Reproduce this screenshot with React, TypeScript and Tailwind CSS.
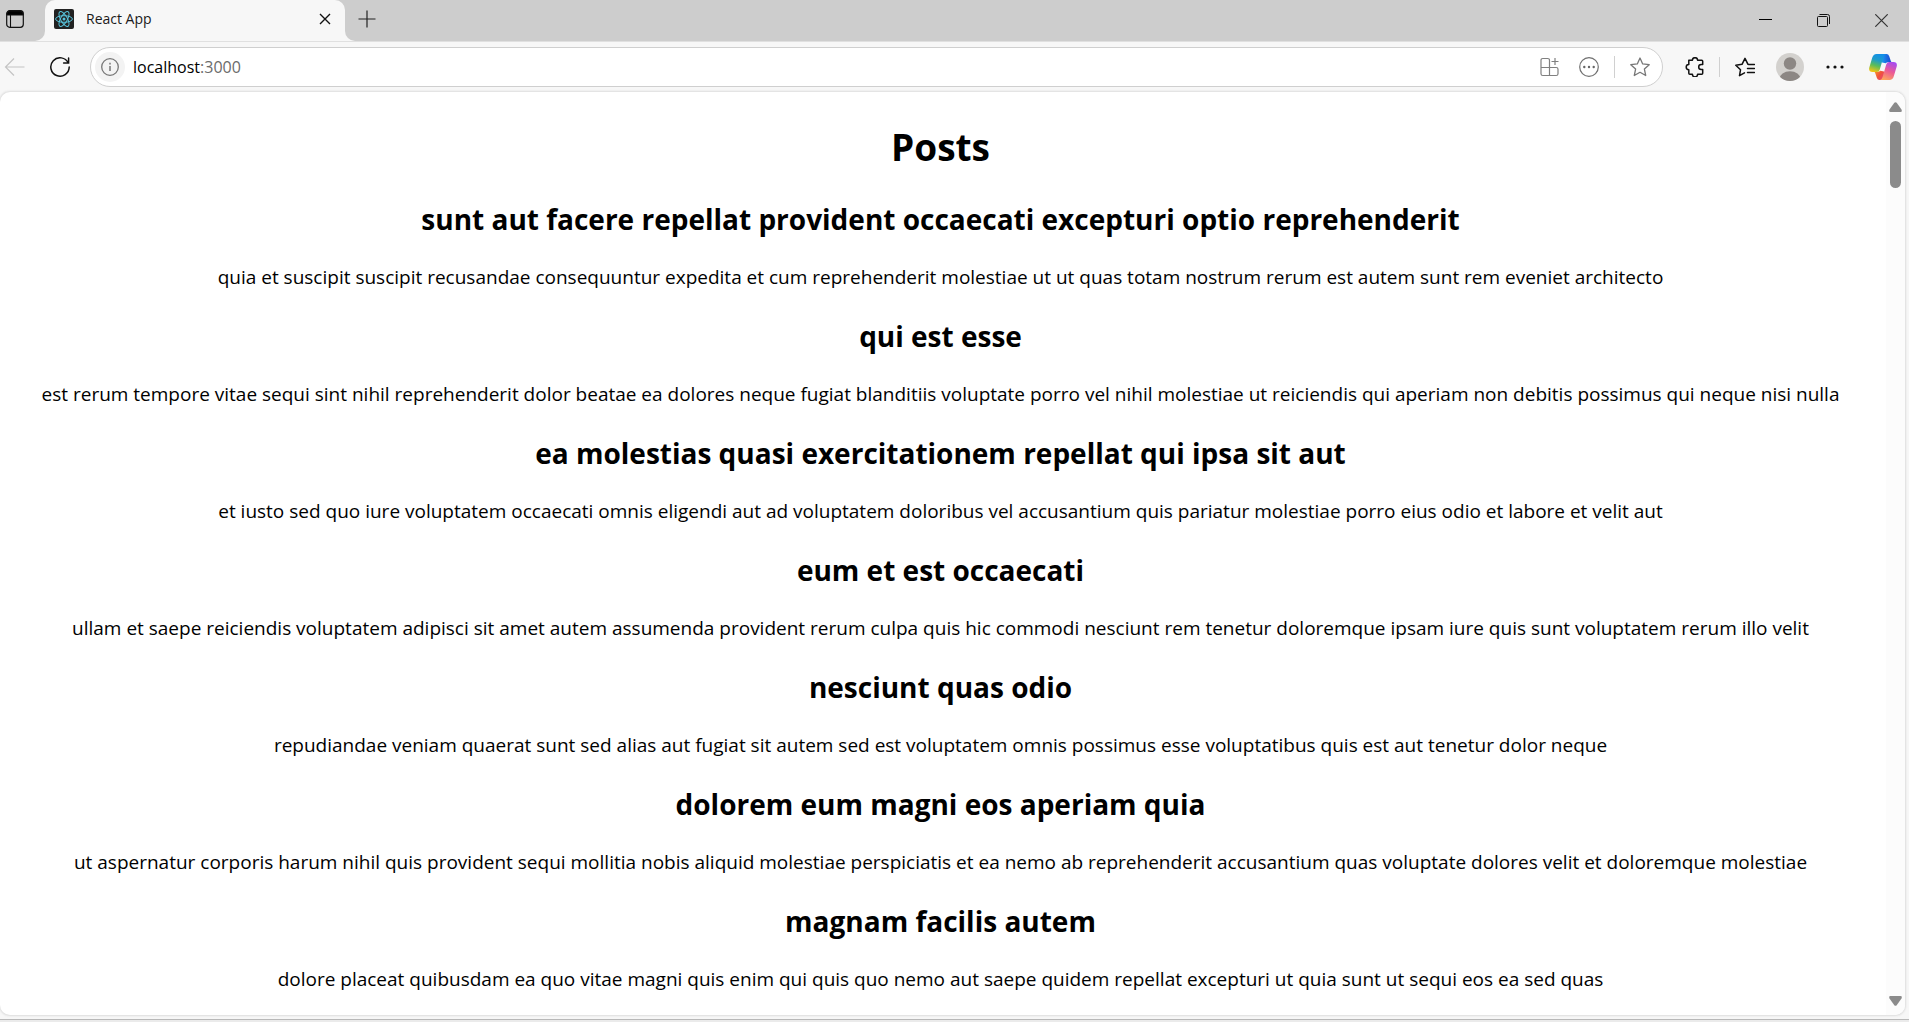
import React from "react";

const posts = [
  { title: "sunt aut facere repellat provident occaecati excepturi optio reprehenderit", body: "quia et suscipit suscipit recusandae consequuntur expedita et cum reprehenderit molestiae ut ut quas totam nostrum rerum est autem sunt rem eveniet architecto" },
  { title: "qui est esse", body: "est rerum tempore vitae sequi sint nihil reprehenderit dolor beatae ea dolores neque fugiat blanditiis voluptate porro vel nihil molestiae ut reiciendis qui aperiam non debitis possimus qui neque nisi nulla" },
  { title: "ea molestias quasi exercitationem repellat qui ipsa sit aut", body: "et iusto sed quo iure voluptatem occaecati omnis eligendi aut ad voluptatem doloribus vel accusantium quis pariatur molestiae porro eius odio et labore et velit aut" },
  { title: "eum et est occaecati", body: "ullam et saepe reiciendis voluptatem adipisci sit amet autem assumenda provident rerum culpa quis hic commodi nesciunt rem tenetur doloremque ipsam iure quis sunt voluptatem rerum illo velit" },
  { title: "nesciunt quas odio", body: "repudiandae veniam quaerat sunt sed alias aut fugiat sit autem sed est voluptatem omnis possimus esse voluptatibus quis est aut tenetur dolor neque" },
  { title: "dolorem eum magni eos aperiam quia", body: "ut aspernatur corporis harum nihil quis provident sequi mollitia nobis aliquid molestiae perspiciatis et ea nemo ab reprehenderit accusantium quas voluptate dolores velit et doloremque molestiae" },
  { title: "magnam facilis autem", body: "dolore placeat quibusdam ea quo vitae magni quis enim qui quis quo nemo aut saepe quidem repellat excepturi ut quia sunt ut sequi eos ea sed quas" },
];

function TabStrip() {
  return (
    <div className="flex h-[41px] bg-[#f7f7f7]">
      <div className="flex w-[45px] items-center rounded-br-[10px] bg-[#cdcdcd] pl-1.5">
        <button aria-label="Tab actions menu">
          <svg width="18" height="18" viewBox="0 0 18 18" className="mb-1" fill="none" stroke="#111">
            <rect x="0.7" y="0.7" width="16.6" height="16.6" rx="3" strokeWidth="1.2" />
            <path d="M1 3.5Q1 1 3.5 1h11Q17 1 17 3.5V5H1z" fill="#000" />
            <path d="M4.5 5v12" strokeWidth="1.1" />
          </svg>
        </button>
      </div>
      <div className="bg-[#cdcdcd]">
        <div className="flex h-full w-[300px] items-center rounded-t-[10px] bg-[#f7f7f7] pr-3.5 pb-1 pl-[9px]">
          <svg width="20" height="20" viewBox="0 0 20 20" fill="none" stroke="#58c4dc">
            <rect width="20" height="20" rx="2" fill="#222" stroke="none" />
            <circle cx="10" cy="10" r="1.5" fill="#58c4dc" stroke="none" />
            <ellipse cx="10" cy="10" rx="8.4" ry="3.3" />
            <ellipse cx="10" cy="10" rx="8.4" ry="3.3" transform="rotate(60 10 10)" />
            <ellipse cx="10" cy="10" rx="8.4" ry="3.3" transform="rotate(120 10 10)" />
          </svg>
          <span className="ml-3 flex-1 text-[14px] text-[#1a1a1a]">React App</span>
          <button aria-label="Close tab">
            <svg width="12" height="12" viewBox="0 0 12 12" stroke="#111" strokeWidth="1.4"><path d="M1 1l10 10M11 1L1 11" /></svg>
          </button>
        </div>
      </div>
      <div className="flex flex-1 items-center rounded-bl-[10px] bg-[#cdcdcd] pr-[21px] pb-1 pl-[13px]">
        <button aria-label="New tab">
          <svg width="18" height="18" viewBox="0 0 18 18" stroke="#222" strokeWidth="1.2"><path d="M9 0.5v17M0.5 9h17" /></svg>
        </button>
        <div className="ml-auto flex items-center gap-[45px] pt-1">
          <button aria-label="Minimize">
            <svg width="13" height="13" viewBox="0 0 13 13"><path d="M0 5.5h13" stroke="#000" /></svg>
          </button>
          <button aria-label="Restore">
            <svg width="13" height="13" viewBox="0 0 13 13" fill="none" stroke="#111">
              <rect x="0.5" y="2.5" width="10" height="10" rx="1" />
              <path d="M2.5 0.5H10.5Q12.5 0.5 12.5 2.5V10" />
            </svg>
          </button>
          <button aria-label="Close window">
            <svg width="13" height="13" viewBox="0 0 13 13" stroke="#333" strokeWidth="1.2"><path d="M0.3 0.3l12.4 12.4M12.7 0.3L0.3 12.7" /></svg>
          </button>
        </div>
      </div>
    </div>
  );
}

function CopilotLogo() {
  return (
    <svg width="28" height="26" viewBox="0 0 28 26">
      <defs>
        <linearGradient id="cpBack" x1="0" y1="0" x2="1" y2="0">
          <stop offset="0" stopColor="#1aa4ee" />
          <stop offset="0.5" stopColor="#1b6be0" />
          <stop offset="1" stopColor="#1c43c8" />
        </linearGradient>
        <linearGradient id="cpLeft" x1="0.6" y1="0" x2="0.3" y2="1">
          <stop offset="0" stopColor="#128fe9" />
          <stop offset="0.35" stopColor="#1f9cc8" />
          <stop offset="0.65" stopColor="#5bbd59" />
          <stop offset="1" stopColor="#f2c515" />
        </linearGradient>
        <linearGradient id="cpRight" x1="0.7" y1="0" x2="0.3" y2="1">
          <stop offset="0" stopColor="#a64bf0" />
          <stop offset="0.5" stopColor="#ec5a95" />
          <stop offset="1" stopColor="#fda65c" />
        </linearGradient>
        <linearGradient id="cpFront" x1="0" y1="0" x2="1" y2="0.6">
          <stop offset="0" stopColor="#f9a02a" />
          <stop offset="0.6" stopColor="#f0513a" />
          <stop offset="1" stopColor="#e8477a" />
        </linearGradient>
      </defs>
      <path d="M12 0h5.5q2 0 2.700 2.200l1.700 5q.3 1 1.600 1h-4.500q-1.500 0-2.200 1L13 8.500z" fill="url(#cpBack)" />
      <path d="M16 26h-5.500q-2 0-2.700-2.200l-1.700-5q-.3-1-1.600-1H9q1.500 0 2.200-1l3.800.7z" fill="url(#cpFront)" />
      <path d="M7.500 0H17q-1.800.5-2.600 3L10.800 15.500q-.7 2.500-3 2.500H3.500Q-.7 18 .3 13.500L3.200 3.800Q4.300 0 7.500 0z" fill="url(#cpLeft)" />
      <path d="M20.500 26H11q1.800-.5 2.600-3L17.200 10.500q.7-2.500 3-2.500h4.300q4.200 0 3.200 4.500l-2.900 9.700q-1.100 3.800-4.300 3.800z" fill="url(#cpRight)" />
    </svg>
  );
}

function Toolbar() {
  return (
    <div className="flex h-[51px] items-center border-t border-[#e0e0e0] bg-[#f7f7f7] pr-3 pl-1">
      <button aria-label="Back" className="mr-[25px]">
        <svg width="21" height="20" viewBox="0 0 21 20" fill="none" stroke="#c4c4c4" strokeWidth="1.200"><path d="M20.500 10H1.500M10 1.500L1.500 10l8.500 8.500" /></svg>
      </button>
      <button aria-label="Refresh">
        <svg width="20" height="20" viewBox="0 0 20 20" fill="none" stroke="#111" strokeWidth="1.500" strokeLinecap="round"><path d="M18.300 6A9.200 9.200 0 1 0 19.200 10M18.600 1v5h-5" /></svg>
      </button>
      <div className="ml-5 flex h-10 flex-1 items-center rounded-full border border-[#cfcfcf] bg-white pr-3">
        <button aria-label="View site information" className="ml-1 flex size-[30px] items-center justify-center rounded-full bg-[#f3f3f3]">
          <svg width="18" height="18" viewBox="0 0 18 18" fill="none" stroke="#777">
            <circle cx="9" cy="9" r="8.300" strokeWidth="1.300" />
            <path d="M9 8v5M9 4.800v1.700" strokeWidth="1.500" />
          </svg>
        </button>
        <label className="relative ml-2 flex flex-1 items-center text-[16px]">
          <input aria-label="Address" defaultValue="localhost:3000" className="w-full bg-transparent text-transparent outline-none" />
          <span aria-hidden="true" className="pointer-events-none absolute left-0 text-[#6b6b6b]"><span className="text-black">localhost</span>:3000</span>
        </label>
        <button aria-label="App available">
          <svg width="19" height="20" viewBox="0 0 19 20" fill="none" stroke="#808080" strokeWidth="1.200">
            <path d="M9.500 10.500V3.300Q9.500 1.500 7.700 1.500H2.800Q1 1.500 1 3.300v13.400Q1 18.500 2.800 18.500h13.400Q18 18.500 18 16.700v-4.400Q18 10.500 16.200 10.500H1M9.500 10.500v8M15 1v7M11.500 4.500h7" />
          </svg>
        </button>
        <button aria-label="More site options" className="ml-5">
          <svg width="20" height="20" viewBox="0 0 20 20" fill="none" stroke="#707070" strokeWidth="1.200">
            <circle cx="10" cy="10" r="9.300" />
            <g fill="#666" stroke="none"><circle cx="5.300" cy="10" r="1.200" /><circle cx="10" cy="10" r="1.200" /><circle cx="14.700" cy="10" r="1.200" /></g>
          </svg>
        </button>
        <div className="mx-[15px] h-[22px] w-px bg-[#d0d0d0]" />
        <button aria-label="Add to favorites">
          <svg width="20" height="20" viewBox="0 0 20 20" fill="none" stroke="#777" strokeWidth="1.300" strokeLinejoin="round">
            <path d="M10 1l2.700 5.900 6.500.8-4.800 4.400 1.300 6.400L10 15.300l-5.700 3.200 1.300-6.400L.8 7.700l6.500-.8z" />
          </svg>
        </button>
      </div>
      <button aria-label="Extensions" className="ml-[22px]">
        <svg width="19" height="20" viewBox="0 0 19 20" fill="none" stroke="#111" strokeWidth="1.500" strokeLinejoin="round">
          <path d="M3.800 3.300h3.600A2.600 2.600 0 0 1 12.600 3.300h4.100q1 0 1 1v3.200h-1.500a2.500 2.500 0 0 0 0 5h1.500v3.800q0 1-1 1h-4.100a2.600 2.600 0 0 1-5.200 0H4.800q-1 0-1-1v-3.600A2.600 2.600 0 0 1 3.800 7.500z" />
        </svg>
      </button>
      <div className="mx-[15px] h-5 w-px bg-[#d0d0d0]" />
      <button aria-label="Favorites">
        <svg width="20" height="20" viewBox="0 0 20 20" fill="none" stroke="#111" strokeWidth="1.500" strokeLinejoin="round" strokeLinecap="round">
          <path d="M9.500 15.800L4.500 18.700l1-5.900L.8 8.200l6.200-.9L10 1.300l3 6M13.500 7.500H19.500M12.500 11.500h7M12.500 15.500h7" />
        </svg>
      </button>
      <button aria-label="Profile" className="ml-[21px]">
        <svg width="28" height="28" viewBox="0 0 28 28">
          <defs><clipPath id="avatarClip"><circle cx="14" cy="14" r="14" /></clipPath></defs>
          <circle cx="14" cy="14" r="14" fill="#d3d1ce" />
          <g fill="#8c8784" clipPath="url(#avatarClip)"><circle cx="14" cy="10.500" r="6.200" /><ellipse cx="14" cy="26" rx="10.500" ry="7.800" /></g>
        </svg>
      </button>
      <button aria-label="Settings and more" className="ml-[22px]">
        <svg width="18" height="6" viewBox="0 0 18 6" fill="#111"><circle cx="2" cy="3" r="1.600" /><circle cx="9" cy="3" r="1.600" /><circle cx="16" cy="3" r="1.600" /></svg>
      </button>
      <button aria-label="Copilot" className="ml-[25px]"><CopilotLogo /></button>
    </div>
  );
}

function Scrollbar() {
  return (
    <div className="flex w-[19px] flex-col items-center bg-[#fcfcfc] pt-2.5 pb-[9px]">
      <svg width="13" height="10" viewBox="0 0 13 10" fill="#8b8b8b"><path d="M5.300.8Q6.500-.5 7.700.8L12.500 7.500Q13.500 10 11.500 10h-10Q-.5 10 .5 7.500z" /></svg>
      <div className="mt-[9px] h-[67px] w-[11px] rounded-full bg-[#8b8b8b]" />
      <svg className="mt-auto" width="13" height="10" viewBox="0 0 13 10" fill="#8b8b8b"><path d="M5.300 9.200Q6.500 10.500 7.700 9.200L12.500 2.500Q13.500 0 11.500 0h-10Q-.5 0 .5 2.500z" /></svg>
    </div>
  );
}

export default function App() {
  return (
    <div className="flex min-h-screen flex-col bg-[#f7f7f7] font-['Open_Sans','Noto_Sans',sans-serif] text-black">
      <header>
        <TabStrip />
        <Toolbar />
      </header>
      <div className="mr-1 flex flex-1 overflow-hidden rounded-[10px] bg-white shadow-[0_0_2px_1px_#dddddd]">
        <main className="min-w-0 flex-1 pt-7 pr-[5px] text-center">
          <h1 className="mb-[26px] text-[37px] leading-[53px] font-bold">Posts</h1>
          <div className="flex flex-col gap-[25px]">
            {posts.map((post) => (
              <article key={post.title}>
                <h2 className="text-[28px] leading-10 font-bold">{post.title}</h2>
                <p className="mt-6 text-[19px] leading-7">{post.body}</p>
              </article>
            ))}
          </div>
        </main>
        <Scrollbar />
      </div>
      <footer className="mt-1 h-[3px] border-t border-[#b8b8b8] bg-[#ebebeb]" />
    </div>
  );
}
